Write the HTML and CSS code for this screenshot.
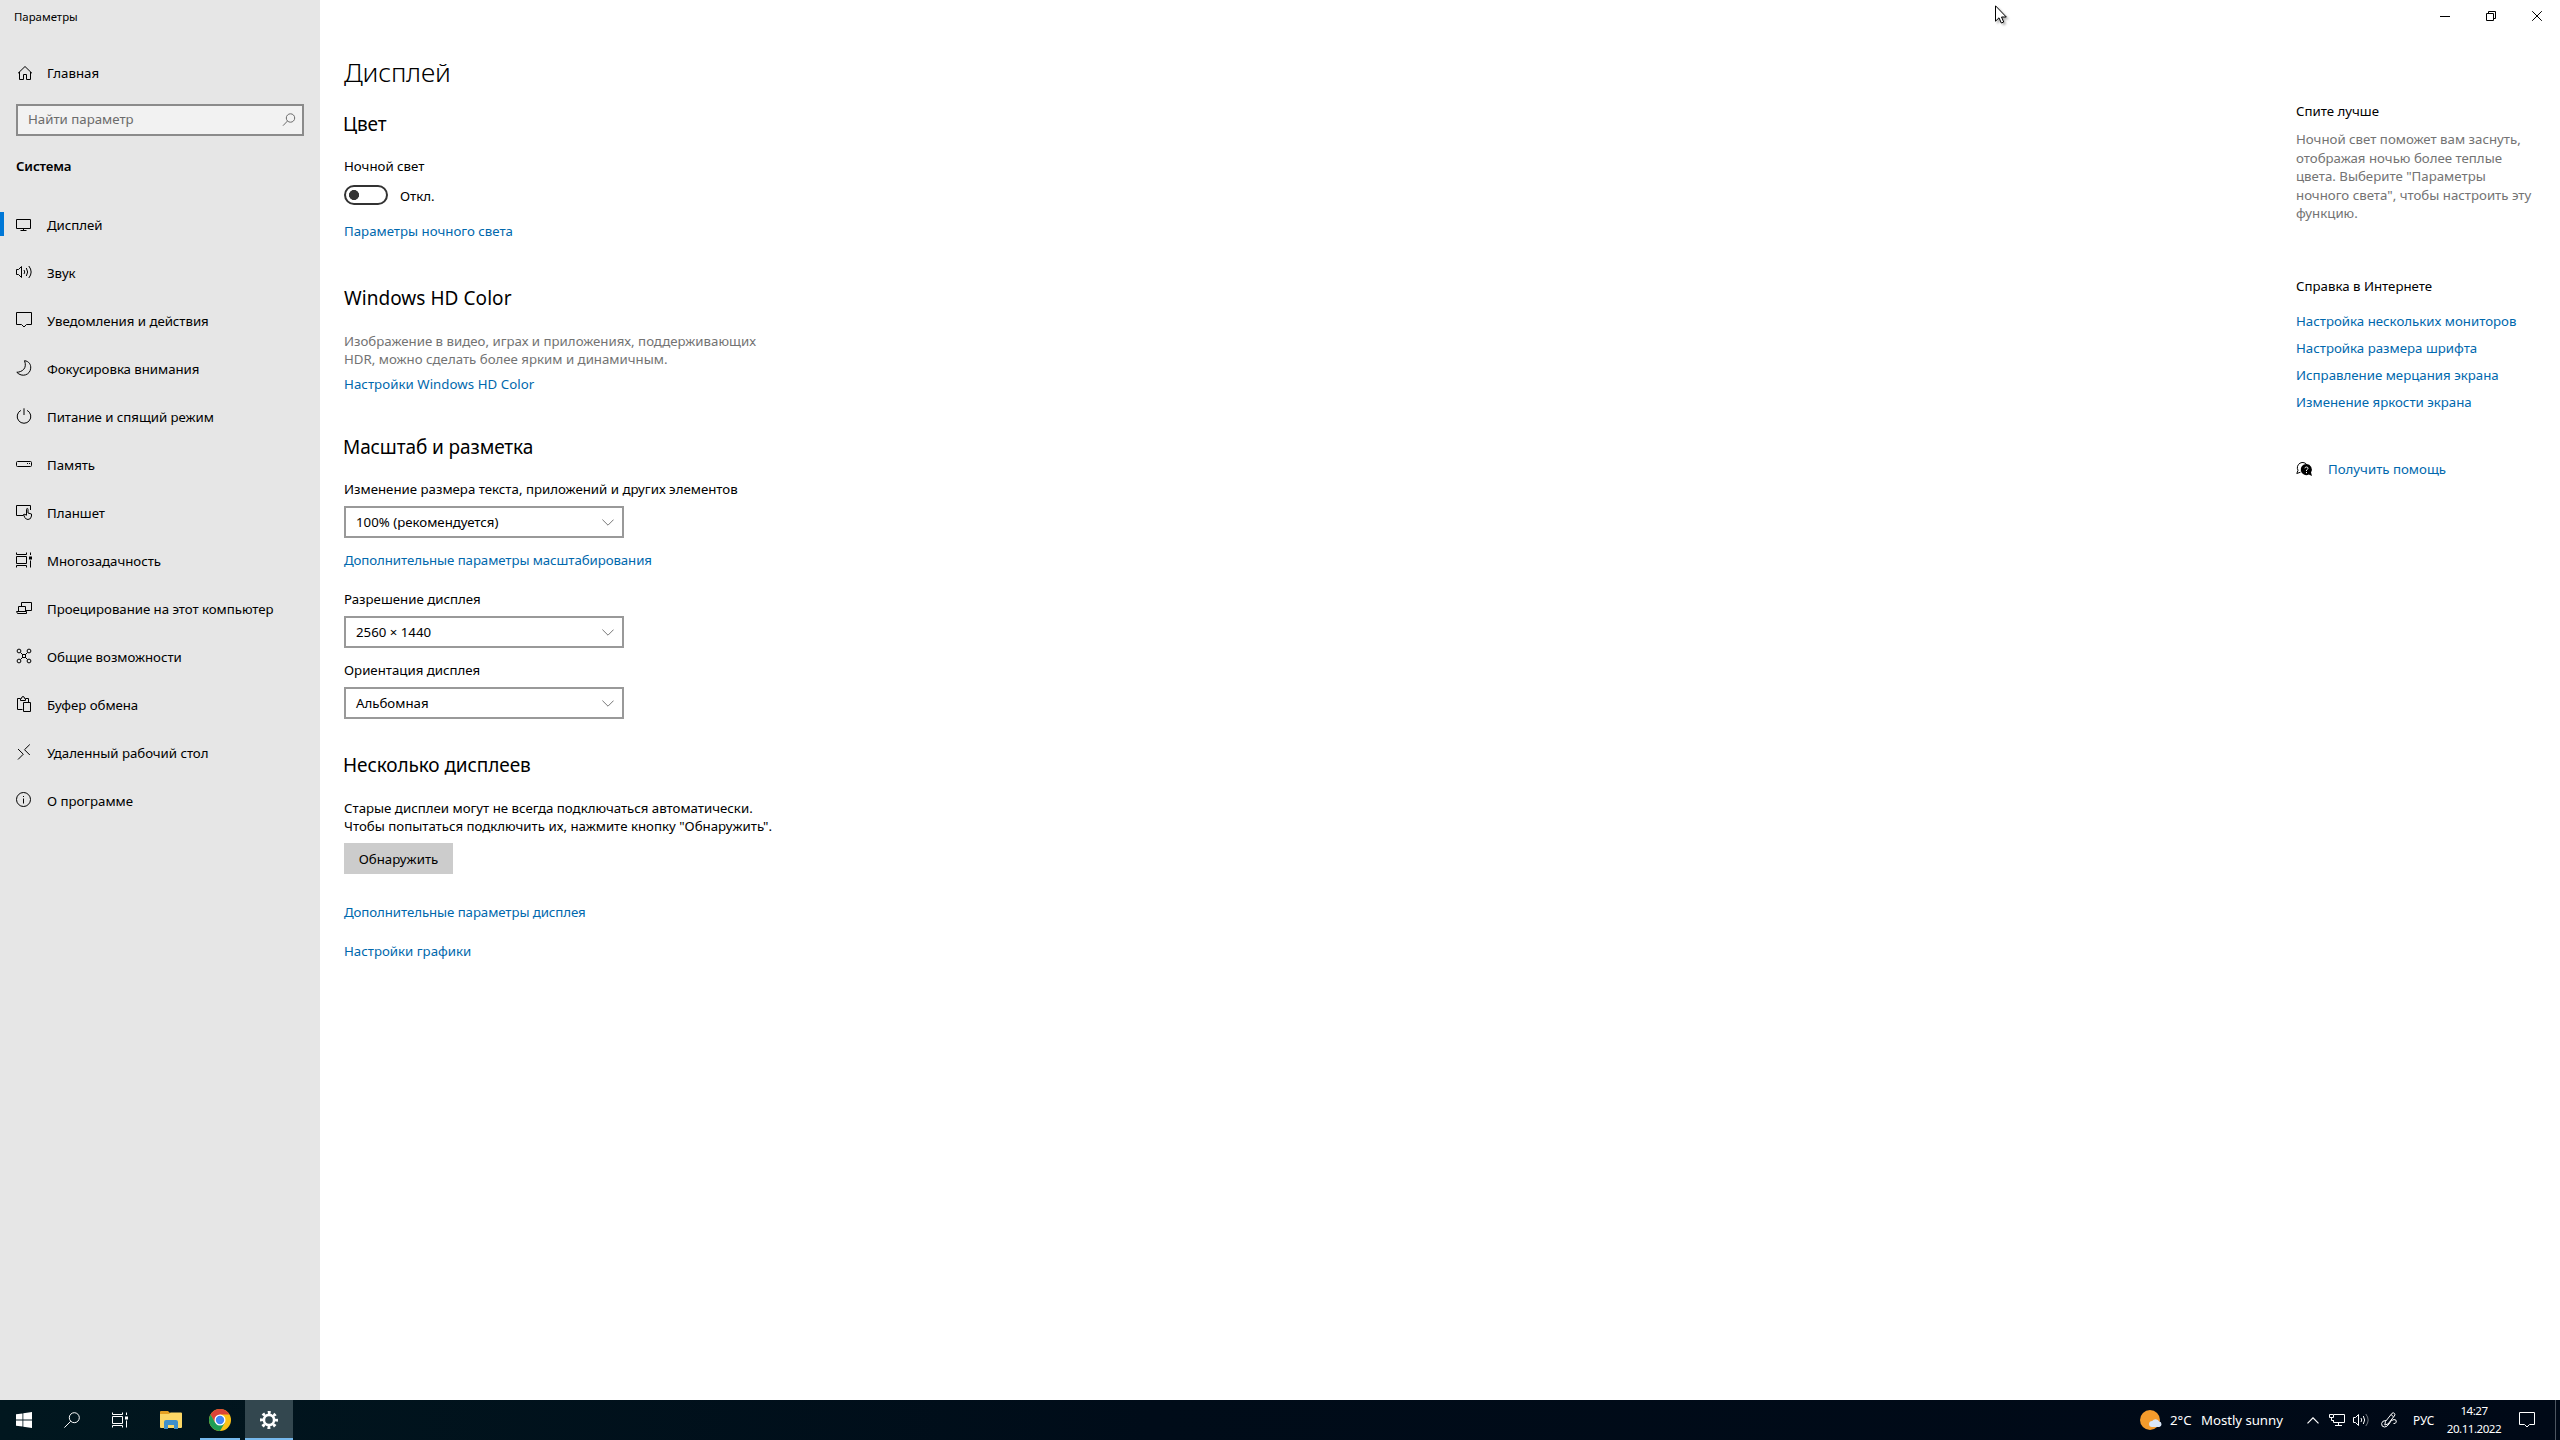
FILE: index.html
```html
<!DOCTYPE html>
<html lang="ru">
<head>
    <meta charset="UTF-8">
    <meta name="viewport" content="width=device-width, initial-scale=1.0">
    <title>Параметры</title>
    <link rel="stylesheet" href="styles.css">
</head>
<body>

    <div class="window">
        <!-- Sidebar -->
        <div class="sidebar">
            <div class="app-title">Параметры</div>
            <a class="home">
                <svg class="icon" viewBox="0 0 16 16"><path d="M1 8.300L8 1.500L15 8.300M2.500 7V14.500H6.500V9.500H9.500V14.500H13.500V7"/></svg>
                <span>Главная</span>
            </a>
            <div class="search">
                <span>Найти параметр</span>
                <svg class="icon search-icon" viewBox="0 0 16 16"><circle cx="9.500" cy="6" r="4.200"/><path d="M6.500 9L2 13.700"/></svg>
            </div>
            <div class="category">Система</div>

            <div class="nav">
                <a class="nav-item active">
                    <svg class="icon" viewBox="0 0 16 16"><path d="M.5 3.500H14.500V12.500H.5ZM7.500 12.500V14.500M4.500 14.500H10.500"/></svg>
                    <span>Дисплей</span>
                </a>
                <a class="nav-item">
                    <svg class="icon" viewBox="0 0 16 16"><path d="M.5 5.500H2.500L5.500 2.500V13.500L2.500 10.500H.5ZM8 6Q9.500 8 8 10M10.300 4Q13 8 10.300 12M12.800 2Q17.500 8 12.800 14"/></svg>
                    <span>Звук</span>
                </a>
                <a class="nav-item">
                    <svg class="icon" viewBox="0 0 16 16"><path d="M.5 .5H15.500V12.500H10.500L8 15L5.500 12.500H.5Z"/></svg>
                    <span>Уведомления и действия</span>
                </a>
                <a class="nav-item">
                    <svg class="icon" viewBox="0 0 16 16"><path d="M8.500 .7C13 1.200 15 4.500 14.700 8.200C14.200 15 6 17.800 .8 12.300C6 12 11.500 8.500 8.500 .7Z"/></svg>
                    <span>Фокусировка внимания</span>
                </a>
                <a class="nav-item">
                    <svg class="icon" viewBox="0 0 16 16"><path d="M8 .3V7M4.900 2.400A6.800 6.800 0 1 0 11.100 2.400"/></svg>
                    <span>Питание и спящий режим</span>
                </a>
                <a class="nav-item">
                    <svg class="icon" viewBox="0 0 16 16"><rect x=".5" y="5.500" width="15" height="5" rx="1"/><path d="M11 7.500H12M13 7.500H14"/></svg>
                    <span>Память</span>
                </a>
                <a class="nav-item">
                    <svg class="icon" viewBox="0 0 16 16"><path d="M7.500 11.500H.5V1.500H14.500V6M10.500 11V5.500Q10.500 4.500 11.300 4.500T12 5.500V9L15.500 10V12Q15 15.500 12 15.500Q10 15.500 8.800 13.500L7.500 10.500Q9 9.500 10.500 11.500"/></svg>
                    <span>Планшет</span>
                </a>
                <a class="nav-item">
                    <svg class="icon" viewBox="0 0 16 16"><path d="M.5 .5V2.500H10.500V.5M.5 4.500H10.500V11.500H.5ZM.5 15.500V13.500H10.500V15.500M14.500 .5V3M14.500 8.500V15.500"/><path class="fill" d="M13 4.500H16V7.500H13Z"/></svg>
                    <span>Многозадачность</span>
                </a>
                <a class="nav-item">
                    <svg class="icon" viewBox="0 0 16 16"><path d="M5.500 6V2.500H15.500V10.500H10M2.500 11V6.500H9.500V11M.5 11.500H10.500V13.500H1.500Z"/></svg>
                    <span>Проецирование на этот компьютер</span>
                </a>
                <a class="nav-item">
                    <svg class="icon" viewBox="0 0 16 16"><circle cx="3" cy="3" r="1.900"/><circle cx="13" cy="3" r="1.900"/><circle cx="3" cy="13" r="1.900"/><circle cx="13" cy="13" r="1.900"/><path d="M4.500 4.500L6.500 6.500M11.500 4.500L9.500 6.500M4.500 11.500L6.500 9.500M11.500 11.500L9.500 9.500"/><rect x="6.500" y="6.500" width="3" height="3"/></svg>
                    <span>Общие возможности</span>
                </a>
                <a class="nav-item">
                    <svg class="icon" viewBox="0 0 16 16"><path d="M6.500 13.500H1.500V2.500H4M10 2.500H12.500V6M4.500 4.500V2.500H5.500Q5.500 .5 7 .5T8.500 2.500H9.500V4.500ZM7.500 6.500H14.500V15.500H7.500Z"/></svg>
                    <span>Буфер обмена</span>
                </a>
                <a class="nav-item">
                    <svg class="icon" viewBox="0 0 16 16"><path d="M2 5L7.300 10.200L2 15.500M13.800 .5L8.500 5.700L13.800 11"/></svg>
                    <span>Удаленный рабочий стол</span>
                </a>
                <a class="nav-item">
                    <svg class="icon" viewBox="0 0 16 16"><circle cx="7.500" cy="7.500" r="7"/><path d="M7.500 6.500V11.500M7.500 4V5"/></svg>
                    <span>О программе</span>
                </a>
            </div>
        </div>

        <!-- Display settings -->
        <div class="content">
            <h1>Дисплей</h1>

            <h2 class="first">Цвет</h2>
            <div class="label">Ночной свет</div>
            <div class="toggle-row">
                <div class="toggle"></div>
                <span>Откл.</span>
            </div>
            <a class="link night-link">Параметры ночного света</a>

            <h2 class="hd">Windows HD Color</h2>
            <p class="muted">Изображение в видео, играх и приложениях, поддерживающих<br>HDR, можно сделать более ярким и динамичным.</p>
            <a class="link hd-link">Настройки Windows HD Color</a>

            <h2 class="scale">Масштаб и разметка</h2>
            <div class="label">Изменение размера текста, приложений и других элементов</div>
            <div class="select">
                <span>100% (рекомендуется)</span>
                <svg class="chevron" viewBox="0 0 12 7"><path d="M.4 .6L6 6.200L11.600 .6"/></svg>
            </div>
            <a class="link scale-link">Дополнительные параметры масштабирования</a>
            <div class="label resolution">Разрешение дисплея</div>
            <div class="select">
                <span>2560 × 1440</span>
                <svg class="chevron" viewBox="0 0 12 7"><path d="M.4 .6L6 6.200L11.600 .6"/></svg>
            </div>
            <div class="label orientation">Ориентация дисплея</div>
            <div class="select">
                <span>Альбомная</span>
                <svg class="chevron" viewBox="0 0 12 7"><path d="M.4 .6L6 6.200L11.600 .6"/></svg>
            </div>

            <h2 class="multi">Несколько дисплеев</h2>
            <p>Старые дисплеи могут не всегда подключаться автоматически.<br>Чтобы попытаться подключить их, нажмите кнопку "Обнаружить".</p>
            <button class="detect">Обнаружить</button>
            <a class="link advanced-link">Дополнительные параметры дисплея</a>
            <a class="link graphics-link">Настройки графики</a>
        </div>

        <!-- Right column -->
        <div class="right">
            <div class="caption">
                <svg width="10" height="10" viewBox="0 0 10 10"><path d="M0 5.500H10"/></svg>
                <svg width="10" height="10" viewBox="0 0 10 10"><path d="M.5 2.500H7.500V9.500H.5ZM2.500 2.500V.5H9.500V7.500H7.500"/></svg>
                <svg width="10" height="10" viewBox="0 0 10 10"><path d="M.2 .2L9.800 9.800M9.800 .2L.2 9.800"/></svg>
            </div>
            <div class="help">
                <div class="help-title">Спите лучше</div>
                <p class="muted">Ночной свет поможет вам заснуть,<br>отображая ночью более теплые<br>цвета. Выберите "Параметры<br>ночного света", чтобы настроить эту<br>функцию.</p>
                <div class="help-title web">Справка в Интернете</div>
                <div class="help-links">
                    <a class="link">Настройка нескольких мониторов</a>
                    <a class="link">Настройка размера шрифта</a>
                    <a class="link">Исправление мерцания экрана</a>
                    <a class="link">Изменение яркости экрана</a>
                </div>
                <div class="get-help">
                    <svg class="icon" viewBox="0 0 16 16"><path d="M4.500 11.200L.8 12.500L2 9.300A5.200 5.200 0 1 1 11.200 4.200"/><path class="fill" d="M10.500 2.900A5.600 5.600 0 1 0 12.800 13.500L16 15L15 11.500A5.600 5.600 0 0 0 10.500 2.900Z"/><path class="question" d="M8.900 7.300Q9 6 10.500 6T12 7.400Q12 8.200 10.500 9V10M10.500 11V12.200"/></svg>
                    <a class="link">Получить помощь</a>
                </div>
            </div>
        </div>
    </div>

    <!-- Taskbar -->
    <div class="taskbar">
        <div class="task">
            <svg width="16" height="16" viewBox="0 0 16 16"><path fill="#fff" d="M0 2.300L6.500 1.400V7.500H0ZM7.300 1.300L16 0V7.500H7.300ZM0 8.400H6.500V14.600L0 13.700ZM7.300 8.400H16V16L7.300 14.800Z"/></svg>
        </div>
        <div class="task">
            <svg class="icon" viewBox="0 0 16 16"><circle cx="10.300" cy="5.700" r="5"/><path d="M6.700 9.300L.4 15.600"/></svg>
        </div>
        <div class="task">
            <svg class="icon" viewBox="0 0 16 16"><path d="M.5 .5V2.500H10.500V.5M.5 4.500H10.500V11.500H.5ZM.5 15.500V13.500H10.500V15.500M14.500 .5V3M14.500 8.500V15.500"/><path class="fill" d="M13 4.500H16V7.500H13Z"/></svg>
        </div>
        <div class="task folder">
            <svg width="22" height="18" viewBox="0 0 22 18"><path fill="#e5a122" d="M0 1Q0 0 1 0H8L10 2H21V5H0Z"/><path fill="#fcd765" d="M0 3H9L10.500 1.500H21Q22 1.500 22 2.500V16Q22 17 21 17H1Q0 17 0 16Z"/><path fill="#3f8fcb" d="M4 11Q4 9 6 9H16Q18 9 18 11V18H14V14H8V18H4Z"/></svg>
        </div>
        <div class="task chrome">
            <svg width="22" height="22" viewBox="0 0 22 22"><circle cx="11" cy="11" r="11" fill="#fbc116"/><path fill="#db4437" d="M1.500 5.500A11 11 0 0 1 20.500 5.500H11L6.200 13.700Z"/><path fill="#1e9e55" d="M1.500 5.500A11 11 0 0 0 11 22L15.800 13.700H6.200Z"/><circle cx="11" cy="11" r="5.500" fill="#fff"/><circle cx="11" cy="11" r="4.200" fill="#4285f4"/></svg>
        </div>
        <div class="task settings">
            <svg width="18" height="18" viewBox="0 0 18 18"><g fill="none" stroke="#fff"><circle cx="9" cy="9" r="5.100" stroke-width="2.600"/><circle cx="9" cy="9" r="7.500" stroke-width="3" stroke-dasharray="2.900 2.990" stroke-dashoffset="1.450"/></g></svg>
        </div>

        <div class="tray">
            <svg class="weather" width="22" height="20" viewBox="0 0 22 20"><circle cx="10" cy="10" r="10" fill="#f49b2c"/><path fill="#d9e6f7" d="M12 17A3 3 0 0 1 12.200 11A4 4 0 0 1 19.200 11.500A2.800 2.800 0 0 1 19.300 17Z"/></svg>
            <span class="temp">2°C</span>
            <span class="forecast">Mostly sunny</span>
            <svg class="up" width="12" height="7" viewBox="0 0 12 7"><path d="M.5 6.300L6 .8L11.500 6.300"/></svg>
            <svg class="icon network" viewBox="0 0 16 16"><path d="M5 2.500H15.500V10.500H4.500V8M9.500 10.500V13.500M6 13.500H13M.5 2.500H4.500V5.500H.5ZM2.500 5.500V8.500H4.500"/></svg>
            <svg class="icon volume" viewBox="0 0 16 16"><path d="M.5 5.500H2.500L5.500 2.500V13.500L2.500 10.500H.5ZM8 6Q9.500 8 8 10M10.300 4Q13 8 10.300 12"/><path opacity=".45" d="M12.800 2Q17.500 8 12.800 14"/></svg>
            <svg class="icon pen" viewBox="0 0 16 16"><path d="M4.500 9.500L11 1.300Q12.500 .2 13.500 1.500T13.300 4L7 12L3.800 13ZM10 2.500L12.500 4.800M5 8.500Q1 8.500 .6 11.500Q.4 15 3.500 15Q6 15 8 12Q10 7.500 13 7.500Q15.800 7.500 15.300 10Q14.500 12 12.500 11.500"/></svg>
            <span class="lang">РУС</span>
            <div class="clock">
                <span>14:27</span>
                <span>20.11.2022</span>
            </div>
            <svg class="icon action" viewBox="0 0 16 16"><path d="M.5 .5H15.500V12.500H10.500L8 15L5.500 12.500H.5Z"/></svg>
            <div class="show-desktop"></div>
        </div>
    </div>

    <!-- Mouse pointer -->
    <svg class="pointer" width="12" height="19" viewBox="0 0 12 19"><path d="M.5 .8V16.200L4 12.800L6.300 18L8.700 17L6.500 12H11.300Z"/></svg>

</body>
</html>
```

FILE: styles.css
```css
body {
    margin: 0;
    width: 2560px;
    height: 1440px;
    overflow: hidden;
    display: flex;
    flex-direction: column;
    background-color: #fff;
    color: #000;
    font-family: "Noto Sans", "Open Sans", sans-serif;
    font-size: 13.25px;
    line-height: 18px;
    white-space: nowrap;
}

.window {
    display: flex;
    height: 1400px;
}

.icon {
    width: 16px;
    height: 16px;
    flex: none;
    overflow: visible;
    fill: none;
    stroke: currentColor;
    stroke-width: 1;
}

.icon .fill {
    fill: currentColor;
    stroke: none;
}

/* Sidebar */
.sidebar {
    width: 320px;
    flex: none;
    box-sizing: border-box;
    background-color: #e6e6e6;
}

.app-title {
    padding: 8px 0 0 14px;
    font-size: 11.4px;
    line-height: 17px;
}

.home {
    display: flex;
    align-items: center;
    gap: 14px;
    margin: 39px 0 0 17px;
}

.search {
    display: flex;
    align-items: center;
    justify-content: space-between;
    box-sizing: border-box;
    width: 288px;
    height: 32px;
    margin: 22px 0 0 16px;
    padding: 0 5px 2px 10px;
    border: 2px solid #8b8b8b;
    background-color: #f2f2f2;
    color: #6b6b6b;
}

.search-icon {
    position: relative;
    top: 1px;
}

.category {
    margin: 21px 0 0 16px;
    font-weight: 600;
    letter-spacing: -0.15px;
}

.nav {
    margin-top: 26px;
}

.nav-item {
    display: flex;
    align-items: center;
    gap: 15px;
    height: 48px;
    padding-left: 16px;
    line-height: 48px;
    letter-spacing: -0.04px;
}

.nav-item .icon {
    margin-top: -2px;
}

.nav-item.active {
    background: linear-gradient(#0078d7, #0078d7) 0 11px / 4px 24px no-repeat;
}

/* Main column */
.content {
    flex: 1;
    display: flex;
    flex-direction: column;
    align-items: flex-start;
    padding: 54px 0 0 24px;
}

h1 {
    margin: 0;
    font-size: 26.4px;
    font-weight: 350;
    line-height: 37px;
    height: 36px;
    letter-spacing: -0.2px;
}

h2 {
    margin: 0 0 20px -1px;
    font-size: 19px;
    font-weight: 400;
    line-height: 26px;
    letter-spacing: -0.1px;
}

h2.first {
    margin-top: 21px;
}

h2.hd {
    margin: 45px 0 21px 0;
    letter-spacing: 0.05px;
}

h2.scale {
    margin-top: 41px;
}

h2.multi {
    margin-top: 33px;
    margin-bottom: 21px;
}

p {
    margin: 0;
    line-height: 18.5px;
}

.content p {
    height: 37px;
    line-height: 18px;
}

.muted {
    color: #737373;
}

.link {
    color: #0068ad;
    text-decoration: none;
}

.toggle-row {
    display: flex;
    gap: 12px;
    height: 20px;
    margin-top: 10px;
    line-height: 22px;
}

.toggle {
    box-sizing: border-box;
    width: 44px;
    height: 20px;
    border: 2px solid #333;
    border-radius: 10px;
    background: radial-gradient(circle at 8px 8px, #333 4.7px, transparent 5.3px);
}

.night-link {
    margin-top: 17px;
}

.hd-link {
    margin-top: 6px;
    letter-spacing: 0.05px;
}

.select {
    display: flex;
    align-items: center;
    justify-content: space-between;
    box-sizing: border-box;
    width: 280px;
    height: 32px;
    margin-top: 8px;
    padding: 0 8px 0 10px;
    border: 2px solid #999;
}

.chevron {
    width: 12px;
    height: 7px;
    fill: none;
    stroke: #777;
}

.scale-link {
    margin-top: 13px;
    letter-spacing: -0.08px;
}

.resolution {
    margin-top: 21px;
}

.orientation {
    margin-top: 13px;
}

.detect {
    width: 109px;
    height: 31px;
    margin-top: 7px;
    padding: 0;
    border: none;
    background-color: #ccc;
    color: #000;
    font: inherit;
}

.advanced-link {
    margin-top: 29px;
    letter-spacing: -0.08px;
}

.graphics-link {
    margin-top: 21px;
}

/* Right column */
.right {
    width: 264px;
    flex: none;
}

.caption {
    display: flex;
    justify-content: flex-end;
    gap: 36px;
    height: 10px;
    padding: 11px 18px 0 0;
}

.caption svg {
    fill: none;
    stroke: #000;
}

.help {
    padding-top: 81px;
}

.help .muted {
    margin-top: 10px;
}

.help-title.web {
    margin-top: 54.5px;
}

.help-links {
    display: flex;
    flex-direction: column;
    align-items: flex-start;
    gap: 9px;
    margin-top: 17px;
}

.get-help {
    display: flex;
    align-items: center;
    gap: 16px;
    margin-top: 49px;
}

.question {
    stroke: #fff;
}

/* Taskbar */
.taskbar {
    display: flex;
    height: 40px;
    background: linear-gradient(90deg, #01171f, #000c19 45%, #000917);
    color: #fff;
}

.task {
    display: flex;
    align-items: center;
    justify-content: center;
    width: 48px;
}

.task.folder {
    width: 54px;
}

.task.chrome {
    box-sizing: border-box;
    width: 40px;
    border-bottom: 2px solid #76b9ed;
    padding-top: 2px;
    margin-left: 2px;
}

.task.settings {
    box-sizing: border-box;
    margin-left: 5px;
    padding-top: 2px;
    border-bottom: 2px solid #76b9ed;
    background-color: #33474f;
}

.tray {
    display: flex;
    align-items: center;
    margin-left: auto;
}

.up {
    fill: none;
    stroke: #fff;
    stroke-width: 1.2;
}

.temp {
    width: 31px;
    margin-left: 8px;
}

.forecast {
    width: 106px;
    letter-spacing: -0.05px;
}

.network {
    margin-left: 10px;
}

.volume {
    margin-left: 8px;
}

.pen {
    margin-left: 12px;
}

.lang {
    width: 22px;
    margin-left: 16px;
    font-size: 11.8px;
}

.clock {
    display: flex;
    flex-direction: column;
    align-items: center;
    width: 56px;
    margin-left: 11px;
    font-size: 11.6px;
    letter-spacing: -0.5px;
}

.action {
    margin-left: 17px;
}

.show-desktop {
    width: 4px;
    height: 40px;
    margin-left: 20px;
    border-left: 1px solid #4d5560;
}

.pointer {
    position: absolute;
    left: 1995px;
    top: 5px;
    fill: #fff;
    stroke: #000;
    filter: drop-shadow(2px 2px 1px rgba(0, 0, 0, 0.3));
}
```
